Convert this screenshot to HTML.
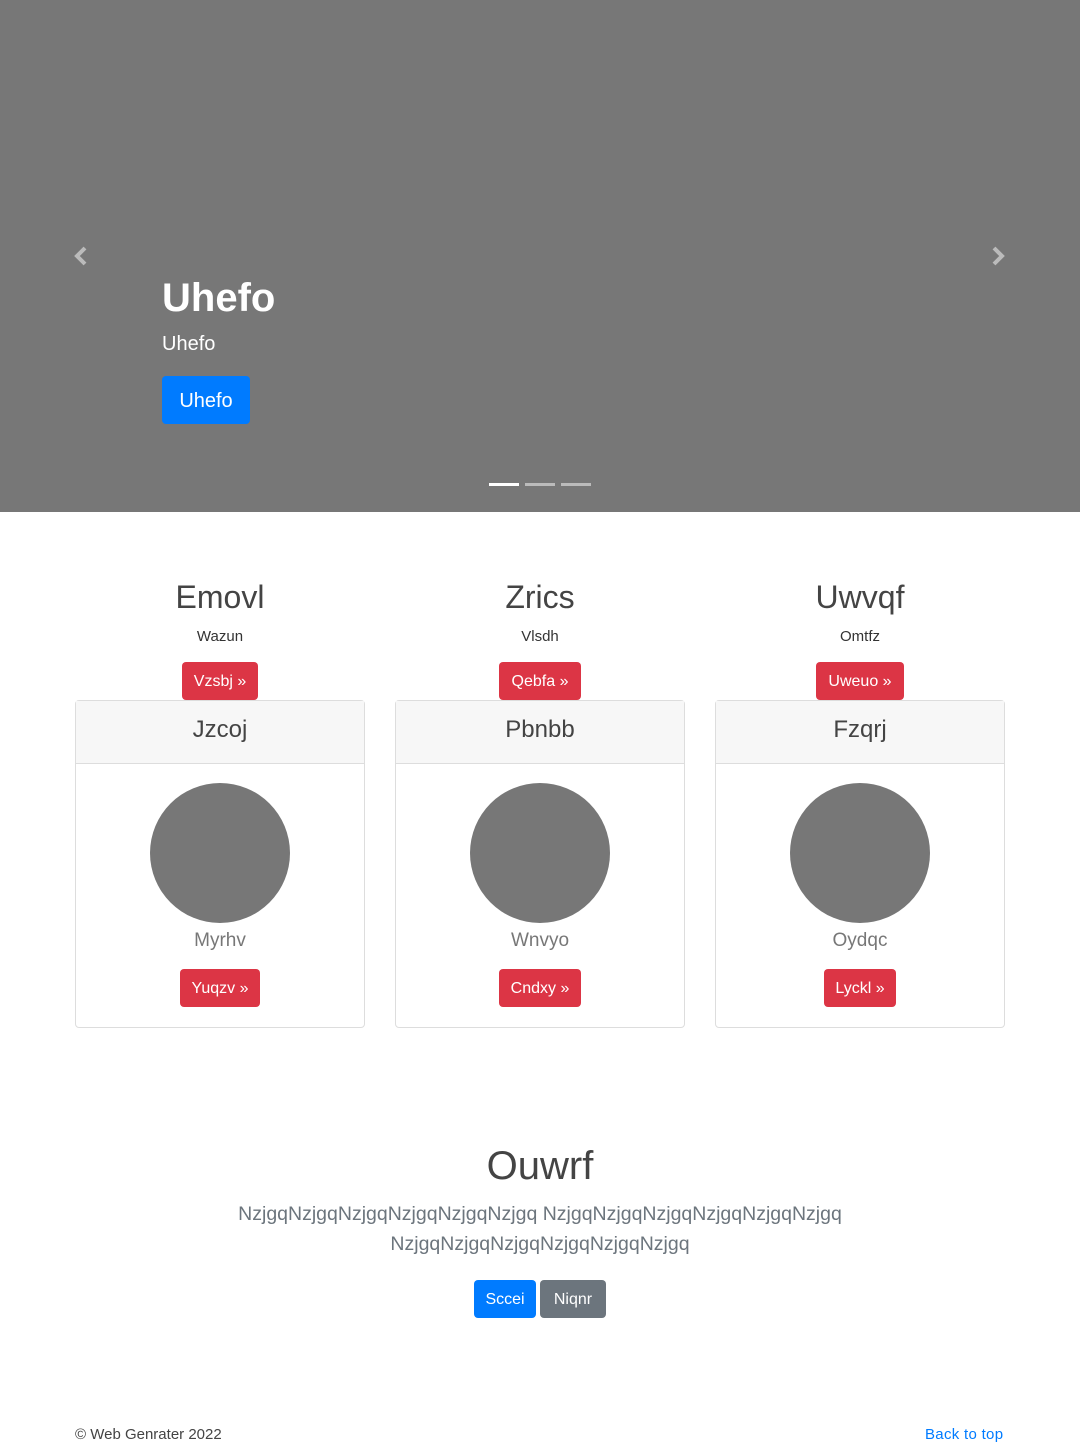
<!DOCTYPE html>
<html><head><meta charset="utf-8"><style>
*{box-sizing:border-box;margin:0;padding:0}
body{width:1080px;height:1446px;background:#fff;font-family:"Liberation Sans",sans-serif;color:#212529;position:relative;overflow:hidden}
.hero{position:absolute;left:0;top:0;width:1080px;height:512px;background:#777}
.abs{position:absolute}
.btn{position:absolute;border-radius:4px;color:#fff;text-align:center}
.red{background:#dc3545}
.card{position:absolute;top:700px;width:290px;height:328px;border:1px solid #ddd;border-radius:4px}
.card .hd{height:63px;background:#f7f7f7;border-bottom:1px solid #ddd;text-align:center;font-size:24px;line-height:58px;color:#444}
.circ{position:absolute;left:74px;top:82px;width:140px;height:140px;border-radius:50%;background:#777}
.ct{text-align:center;color:#333}
</style></head><body>
<div class="hero">
<svg class="abs" style="left:73px;top:246px" width="16" height="20" viewBox="0 0 16 20"><path d="M12 2 L4 10 L12 18" stroke="#bbb" stroke-width="4" fill="none"/></svg>
<svg class="abs" style="left:990px;top:246px" width="16" height="20" viewBox="0 0 16 20"><path d="M4 2 L12 10 L4 18" stroke="#bbb" stroke-width="4" fill="none"/></svg>
<div class="abs" style="left:162px;top:276px;font-size:40px;color:#fff;font-weight:600">Uhefo</div>
<div class="abs" style="left:162px;top:333px;font-size:20px;color:#fff">Uhefo</div>
<div class="btn" style="left:162px;top:376px;width:88px;height:48px;background:#007bff;font-size:20px;line-height:50px">Uhefo</div>
<div class="abs" style="left:489px;top:483px;width:30px;height:3px;background:#fff"></div>
<div class="abs" style="left:525px;top:483px;width:30px;height:3px;background:#bbb"></div>
<div class="abs" style="left:561px;top:483px;width:30px;height:3px;background:#bbb"></div>
</div>

<div class="abs ct" style="left:75px;width:290px;top:579px;font-size:32px;color:#444">Emovl</div>
<div class="abs ct" style="left:75px;width:290px;top:628px;font-size:15px">Wazun</div>
<div class="btn red" style="left:182px;top:662px;width:76px;height:38px;font-size:16px;line-height:40px">Vzsbj »</div>
<div class="abs ct" style="left:395px;width:290px;top:579px;font-size:32px;color:#444">Zrics</div>
<div class="abs ct" style="left:395px;width:290px;top:628px;font-size:15px">Vlsdh</div>
<div class="btn red" style="left:499px;top:662px;width:82px;height:38px;font-size:16px;line-height:40px">Qebfa »</div>
<div class="abs ct" style="left:715px;width:290px;top:579px;font-size:32px;color:#444">Uwvqf</div>
<div class="abs ct" style="left:715px;width:290px;top:628px;font-size:15px">Omtfz</div>
<div class="btn red" style="left:816px;top:662px;width:88px;height:38px;font-size:16px;line-height:40px">Uweuo »</div>

<div class="card" style="left:75px"><div class="hd">Jzcoj</div><div class="circ"></div>
<div class="abs ct" style="left:0;width:288px;top:229px;font-size:19px;color:#777">Myrhv</div>
<div class="btn red" style="left:104px;top:268px;width:80px;height:38px;font-size:16px;line-height:40px">Yuqzv »</div></div>
<div class="card" style="left:395px"><div class="hd">Pbnbb</div><div class="circ"></div>
<div class="abs ct" style="left:0;width:288px;top:229px;font-size:19px;color:#777">Wnvyo</div>
<div class="btn red" style="left:103px;top:268px;width:82px;height:38px;font-size:16px;line-height:40px">Cndxy »</div></div>
<div class="card" style="left:715px"><div class="hd">Fzqrj</div><div class="circ"></div>
<div class="abs ct" style="left:0;width:288px;top:229px;font-size:19px;color:#777">Oydqc</div>
<div class="btn red" style="left:108px;top:268px;width:72px;height:38px;font-size:16px;line-height:40px">Lyckl »</div></div>

<div class="abs ct" style="left:0;width:1080px;top:1144px;font-size:40px;font-weight:300;color:#444">Ouwrf</div>
<div class="abs ct" style="left:220px;width:640px;top:1199px;font-size:19.5px;line-height:30px;color:#6c757d">NzjgqNzjgqNzjgqNzjgqNzjgqNzjgq NzjgqNzjgqNzjgqNzjgqNzjgqNzjgq NzjgqNzjgqNzjgqNzjgqNzjgqNzjgq</div>
<div class="btn" style="left:474px;top:1280px;width:62px;height:38px;background:#007bff;font-size:16px;line-height:40px">Sccei</div>
<div class="btn" style="left:540px;top:1280px;width:66px;height:38px;background:#6c757d;font-size:16px;line-height:40px">Niqnr</div>

<div class="abs" style="left:75px;top:1426px;font-size:15px;color:#444">© Web Genrater 2022</div>
<div class="abs" style="left:925px;top:1426px;font-size:15px;color:#007bff;letter-spacing:0.3px">Back to top</div>
</body></html>
